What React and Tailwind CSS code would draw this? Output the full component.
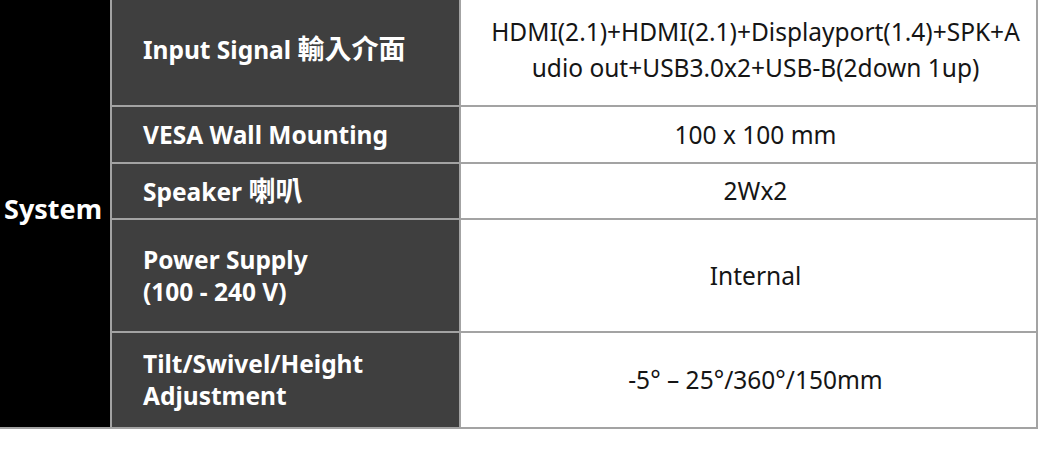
import React from "react";

const Cjk = ({ children }) => <span className="text-[27px]">{children}</span>;

const rows = [
  {
    label: (
      <>
        Input Signal <Cjk>輸入介面</Cjk>
      </>
    ),
    value: (
      <>
        HDMI(2.1)+HDMI(2.1)+Displayport(1.4)+SPK+A
        <br />
        udio out+USB3.0x2+USB-B(2down 1up)
      </>
    ),
    h: "h-[106px]",
  },
  { label: "VESA Wall Mounting", value: "100 x 100 mm", h: "h-[57px]" },
  {
    label: (
      <>
        Speaker <Cjk>喇叭</Cjk>
      </>
    ),
    value: "2Wx2",
    h: "h-[56px]",
  },
  {
    label: (
      <>
        Power Supply
        <br />
        (100 - 240 V)
      </>
    ),
    value: "Internal",
    h: "h-[113px]",
  },
  {
    label: (
      <>
        Tilt/Swivel/Height
        <br />
        Adjustment
      </>
    ),
    value: "-5° – 25°/360°/150mm",
    h: "h-[96px]",
  },
];

export default function App() {
  return (
    <div className="w-[1040px] h-[449px] bg-white overflow-hidden font-['Noto_Sans','Noto_Sans_CJK_TC',sans-serif]">
      <table className="w-[1038px] border-collapse">
        <tbody>
          {rows.map((row, i) => (
            <tr key={i} className={row.h}>
              {i === 0 && (
                <td
                  rowSpan={5}
                  className="w-[111px] bg-black text-white font-bold text-[27px] pl-[4px] pb-[8px] border-b-2 border-[#a3a3a3]"
                >
                  System
                </td>
              )}
              <td
                className={`w-[349px] bg-[#3f3f3f] text-white font-bold text-[24.5px] leading-[32px] pl-[31px] border-l-2 border-r-2 border-[#a3a3a3] ${
                  i === 0 ? "pb-[6px]" : "border-t-2"
                } ${i === 4 ? "border-b-2" : ""}`}
              >
                {row.label}
              </td>
              <td
                className={`bg-white text-[#151515] text-[24.5px] leading-[36px] text-center pl-[14px] border-r-2 border-[#a3a3a3] ${
                  i === 0 ? "pb-[6px]" : "border-t-2"
                } ${i === 4 ? "border-b-2" : ""}`}
              >
                {row.value}
              </td>
            </tr>
          ))}
        </tbody>
      </table>
    </div>
  );
}
